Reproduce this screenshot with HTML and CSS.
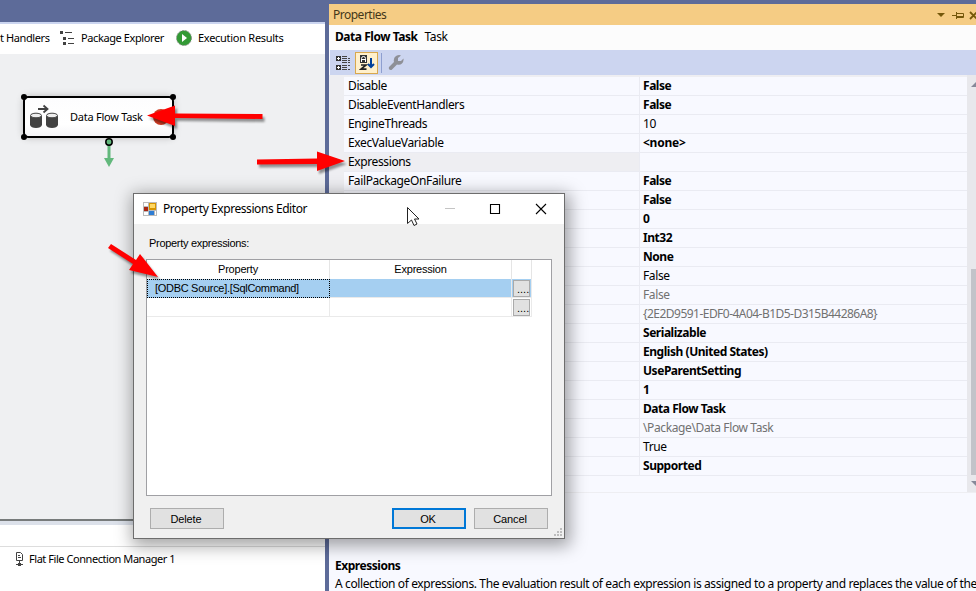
FILE: index.html
```
<!DOCTYPE html>
<html lang="en">
<head>
<meta charset="utf-8">
<title>Property Expressions Editor</title>
<link rel="stylesheet" href="styles.css">
</head>
<body>
<div class="ide">
  <main class="designer">
    <div class="topbar"></div>
    <nav class="tabs">
      <span class="tab-cut">t Handlers</span>
      <svg class="tree-icon" width="16" height="16" viewBox="0 0 16 16"><path fill="#424242" d="M0 1h3v3H0zM3 7h3v3H3zM3 12h3v3H3zM5 2h7v1H5zM8 8h6v1H8zM8 13h6v1H8z"/></svg>
      <span class="tab-package">Package Explorer</span>
      <svg class="run-icon" width="16" height="16" viewBox="0 0 16 16"><circle cx="8" cy="8" r="7.500" fill="#339a35" stroke="#8d958d" stroke-dasharray="2 1"/><path d="M6 4l5 4-5 4z" fill="#fff"/></svg>
      <span class="tab-results">Execution Results</span>
    </nav>
    <section class="canvas">
      <div class="task">
        <svg width="30" height="26" viewBox="0 0 30 26"><g fill="#424242"><path d="M1 12h12v9q-1 3-6 3t-6-3zM17 12h12v9q-1 3-6 3t-6-3z"/></g><path d="M9 5h9M14.500 1.500L18.500 5l-4 3.500" fill="none" stroke="#424242" stroke-width="1.800"/><g fill="#eee" stroke="#424242"><ellipse cx="7" cy="11.500" rx="5.500" ry="2.300"/><ellipse cx="23" cy="11.500" rx="5.500" ry="2.300"/></g></svg>
        <span>Data Flow Task</span>
      </div>
      <svg class="connector" width="12" height="31" viewBox="0 0 12 31"><path d="M4.500 7h3v13h3.500l-5 9-5-9h3.500z" fill="#62b87c"/><circle cx="6" cy="4" r="3.200" fill="#62b87c" stroke="#000" stroke-width="1.500"/></svg>
    </section>
    <section class="managers">
      <div class="managers-tab"></div>
      <div class="manager">
        <svg width="9" height="15" viewBox="0 0 9 15"><path d="M1.500.5h4l2 2v6h-6zM3 3.500h2M3 5.500h3M4.500 9v5M1 12.500h7" fill="none" stroke="#424242"/><path d="M3 11h3v3H3z" fill="#424242"/></svg>
        <span>Flat File Connection Manager 1</span>
      </div>
    </section>
  </main>
  <aside class="properties">
    <header class="panel-title"><span>Properties</span>
      <svg width="40" height="12" viewBox="0 0 40 12"><path d="M1 4h8L5 8z" fill="#75580b"/><path d="M16 6.500h4M20.500 3v7M21 4.500h6.500v4H21M21 7.500h6" fill="none" stroke="#75580b"/><path d="M34 3l7 7M41 3l-7 7" stroke="#75580b" stroke-width="1.800"/></svg>
    </header>
    <div class="object"><b>Data Flow Task</b><span>Task</span></div>
    <div class="tools">
      <svg class="category-icon" width="15" height="16" viewBox="0 0 15 16"><path fill="#333" d="M0 1h5v5H0zM0 10h5v5H0z"/><path fill="#fff" d="M2 2h1v1h1v1H3v1H2V4H1V3h1zM2 11h1v1h1v1H3v1H2v-1H1v-1h1z"/><path d="M6 1.500h5M6 3.500h5M6 5.500h5M6 7.500h5M6 10.500h5M6 12.500h5M6 14.500h5M12 3.500h2M12 5.500h2M12 7.500h2M12 10.500h2M12 14.500h2" fill="none" stroke="#444"/></svg>
      <span class="sort"><svg width="16" height="16" viewBox="0 0 16 16"><path d="M1 0h7v8H1z" fill="#333"/><path d="M2.500 7V3.500Q2.500 1.500 4.500 1.500t2 2V7M2.500 4.500h4" fill="none" stroke="#fff"/><path d="M2 10h5l-5 4.200h5.500" fill="none" stroke="#222" stroke-width="1.700"/><path d="M12 3v9M9 9l3 3 3-3" fill="none" stroke="#00409c" stroke-width="2"/></svg></span>
      <span class="tool-line"></span>
      <svg class="wrench" width="16" height="16" viewBox="0 0 16 16"><path d="M1 12l5-5Q5 3 8 1q3-1.500 5-.5L10 3v3h3l2.500-2.500Q16 6 14 8.500q-2 2-5 1l-5.500 5.500Q0 15.500 1 12z" fill="#8e9097"/></svg>
    </div>
    <div class="grid-area">
      <div class="prop-grid">
        <div class="row"><span>Disable</span><b>False</b></div>
        <div class="row"><span>DisableEventHandlers</span><b>False</b></div>
        <div class="row"><span>EngineThreads</span><span>10</span></div>
        <div class="row"><span>ExecValueVariable</span><b class="wide">&lt;none&gt;</b></div>
        <div class="row selected"><span>Expressions</span><span></span></div>
        <div class="row"><span>FailPackageOnFailure</span><b>False</b></div>
        <div class="row"><span></span><b>False</b></div>
        <div class="row"><span></span><b>0</b></div>
        <div class="row"><span></span><b>Int32</b></div>
        <div class="row"><span></span><b>None</b></div>
        <div class="row"><span></span><span>False</span></div>
        <div class="row readonly"><span></span><span>False</span></div>
        <div class="row readonly"><span></span><span class="guid">{2E2D9591-EDF0-4A04-B1D5-D315B44286A8}</span></div>
        <div class="row"><span></span><b>Serializable</b></div>
        <div class="row"><span></span><b>English (United States)</b></div>
        <div class="row"><span></span><b>UseParentSetting</b></div>
        <div class="row"><span></span><b>1</b></div>
        <div class="row"><span></span><b>Data Flow Task</b></div>
        <div class="row readonly"><span></span><span>\Package\Data Flow Task</span></div>
        <div class="row"><span></span><span>True</span></div>
        <div class="row"><span></span><b>Supported</b></div>
      </div>
      <div class="scrollbar"><i class="up"></i><i class="thumb"></i><i class="down"></i></div>
    </div>
    <footer class="description"><b>Expressions</b><p>A collection of expressions. The evaluation result of each expression is assigned to a property and replaces the value of the</p></footer>
  </aside>
</div>

<div class="dialog">
  <header class="dialog-title">
    <svg class="form-icon" width="14" height="14" viewBox="0 0 14 14"><path fill="#bbb" d="M0 0h14v14H0z"/><path fill="#fff" d="M1 1h4v3H1zM1 10h4v3H1zM12 9h1v4h-1z"/><path fill="#a92712" d="M1 5h4v4H1z"/><path fill="#d79500" d="M6 1h7v7H6z"/><path fill="#ffd862" d="M7 2h5v4H7z"/><path fill="#2e7dd4" d="M6 9h5v4H6z"/></svg>
    <span>Property Expressions Editor</span>
    <svg class="window-buttons" width="103" height="12" viewBox="0 0 103 12"><path d="M0 5.500h10" stroke="#c4c4c4"/><path d="M45.500 1.500h9v9h-9z" fill="none" stroke="#000" stroke-width="1.100"/><path d="M91 1l10 10M101 1L91 11" stroke="#000" stroke-width="1.100"/></svg>
  </header>
  <div class="dialog-body">
    <label>Property expressions:</label>
    <div class="expression-box">
      <div class="expression-grid">
        <div class="head">Property</div><div class="head">Expression</div><div class="head"></div>
        <div class="cell active focus">[ODBC Source].[SqlCommand]</div><div class="cell active"></div><div class="cell active more"><span>....</span></div>
        <div class="cell"></div><div class="cell"></div><div class="cell more"><span>....</span></div>
      </div>
    </div>
    <div class="actions"><button>Delete</button><button class="default">OK</button><button>Cancel</button></div>
  </div>
  <svg class="grip" width="9" height="9" viewBox="0 0 9 9"><path fill="#bdbdbd" d="M6 0h2v2H6zM3 3h2v2H3zM6 3h2v2H6zM0 6h2v2H0zM3 6h2v2H3zM6 6h2v2H6z"/></svg>
</div>

<svg class="annotations" width="976" height="591" viewBox="0 0 976 591">
  <g fill="#000"><circle cx="24" cy="97" r="3"/><circle cx="173" cy="97" r="3"/><circle cx="24" cy="137" r="3"/><circle cx="173" cy="137" r="3"/></g>
  <circle cx="161" cy="117" r="8" fill="#cf3a22"/>
  <g class="arrows" fill="#f00"><path d="M147 115.500l28-10v8l87.500.5v5l-87.500-1v8z"/><path d="M345 161l-28 10v-7l-60 .5v-5l60-1v-7z"/><path d="M158 277l-29-7 4-6-25-16 3-4 25 16 4-6z"/></g>
  <path d="M407.500 207.500v16l4-3.500 2.500 5.500 3-1.500-2.500-5h4.500z" fill="#fff" stroke="#222"/>
</svg>
</body>
</html>
```
FILE: styles.css
```
* { box-sizing: border-box; }
body { margin: 0; width: 976px; height: 591px; overflow: hidden; background: #5d6b99; color: #000; font: 12px/18px "Noto Sans", sans-serif; letter-spacing: -.38px; white-space: nowrap; }
b { letter-spacing: -.46px; }
svg { display: block; flex: none; }
.ide { display: flex; height: 591px; }
.designer { width: 325px; display: flex; flex-direction: column; flex: none; background: #fff; font-size: 11px; letter-spacing: -.35px; }
.topbar { height: 24px; background: #5d6b99; border-bottom: 2px solid #cbd5f0; }
.tabs { height: 30px; display: flex; align-items: center; padding-bottom: 2px; }
.tab-cut { width: 60px; letter-spacing: -.4px; }
.tree-icon { margin-right: 5px; }
.tab-package { width: 95px; letter-spacing: -.4px; }
.run-icon { margin-right: 6px; }
.tab-results { letter-spacing: -.28px; }
.canvas { height: 467px; background: #eff0f2; position: relative; border-bottom: 2px solid #777b7b; }
.task { position: absolute; left: 23px; top: 42px; width: 151px; height: 42px; border: 2px solid #000; border-radius: 5px; background: linear-gradient(#fdfdfe, #fff 70%, #f5f5f7); box-shadow: 0 0 7px #bbb; display: flex; align-items: center; padding-left: 4px; gap: 11px; letter-spacing: -.25px; }
.connector { position: absolute; left: 103px; top: 84px; }
.managers { flex: 1; border-top: 4px solid #dce1ea; }
.managers-tab { height: 22px; border-bottom: 1px solid #ddd; }
.manager { display: flex; align-items: center; gap: 5px; padding: 3px 0 0 15px; letter-spacing: -.45px; }
.properties { width: 647px; margin: 4px 0 0 4px; background: #f8f9ff; display: flex; flex-direction: column; overflow: hidden; }
.properties > * { flex: none; }
.panel-title { height: 21px; background: #f5cc84; display: flex; align-items: center; justify-content: space-between; padding: 1px 0 0 4px; color: #443719; letter-spacing: -.5px; }
.object { height: 25px; background: #fcfcfc; display: flex; align-items: center; padding: 0 0 1px 6px; gap: 7px; }
.tools { height: 25px; margin-left: 1px; background: #ccd5f0; display: flex; align-items: center; }
.category-icon { margin-left: 6px; }
.sort { margin-left: 4px; width: 23px; height: 22px; border: 1px solid #d9a84d; background: #fff0cc; display: grid; place-items: center; }
.tool-line { width: 1px; height: 20px; background: #8e9fd0; margin-left: 3px; }
.wrench { margin-left: 6px; }
.grid-area { height: 418px; display: flex; border-bottom: 1px solid #eeeef2; }
.prop-grid { width: 638px; border-top: 2px solid #eeeef2; background: linear-gradient(90deg, #eeeef2 15px, #f8f9ff 15px); }
.row { height: 19px; display: grid; grid-template-columns: 296px 1fr; margin-left: 15px; border-bottom: 1px solid #eaebf2; }
.row > * { padding-left: 3px; height: 18px; }
.row > :first-child { padding-left: 4px; border-right: 1px solid #eaebf2; }
.row.selected > :first-child { background: #eeeef2; }
.readonly { color: #717171; }
.guid { letter-spacing: -.53px; }
.wide { letter-spacing: -.25px; }
.scrollbar { width: 9px; background: #e8e8ec; display: flex; flex-direction: column; padding-left: 4px; overflow: hidden; }
.up { border: 6px solid transparent; border-top: 0; border-bottom-color: #868999; margin-top: 6px; width: 12px; }
.thumb { height: 206px; margin-top: 182px; background: #c2c3c9; }
.down { border: 6px solid transparent; border-bottom: 0; border-top-color: #868999; margin-top: 6px; width: 12px; }
.description { padding: 64px 0 0 6px; }
.description p { margin: 0; }
.dialog { position: absolute; left: 133px; top: 193px; width: 432px; height: 346px; background: #f0f0f0; border: 1px solid #6d6d6d; box-shadow: 2px 4px 16px 3px rgba(0,0,0,.36); font: 11px/18px "Liberation Sans", sans-serif; letter-spacing: -.3px; }
.dialog-title { height: 30px; background: #fff; display: flex; align-items: center; padding: 0 16px 0 9px; font: 12px/18px "Noto Sans", sans-serif; letter-spacing: -.43px; }
.form-icon { margin-right: 6px; }
.window-buttons { margin-left: auto; }
.dialog-body { padding: 10px 12px 0; }
.dialog-body label { display: block; height: 25px; padding-left: 3px; }
.expression-box { width: 406px; height: 237px; background: #fff; border: 1px solid #a0a0a4; }
.expression-grid { display: grid; grid-template-columns: 183px 182px 20px; grid-template-rows: 19px 19px 19px; width: 385px; }
.head { border-right: 1px solid #e5e5e5; text-align: center; letter-spacing: -.2px; }
.cell { border-right: 1px solid #eaeaea; border-bottom: 1px solid #eaeaea; }
.active { background: #a5cff1; }
.focus { border: 1px dotted #000; line-height: 17px; padding-left: 7px; }
.more { padding: 1px; }
.more span { display: block; width: 17px; height: 17px; background: #e1e1e1; border: 1px solid #aaa; padding-left: 3px; line-height: 17px; letter-spacing: 0; }
.actions { display: flex; padding: 12px 4px 0; }
button { width: 74px; height: 21px; border: 1px solid #adadad; background: #e1e1e1; padding: 0 2px 0 0; font: 11px/18px "Liberation Sans", sans-serif; letter-spacing: -.15px; }
.default { border: 2px solid #0078d7; margin: 0 8px 0 168px; }
.grip { position: absolute; right: 1px; bottom: 1px; }
.annotations { position: absolute; left: 0; top: 0; }
.arrows { filter: drop-shadow(2px 3px 1px rgba(0,0,0,.4)); }
```
